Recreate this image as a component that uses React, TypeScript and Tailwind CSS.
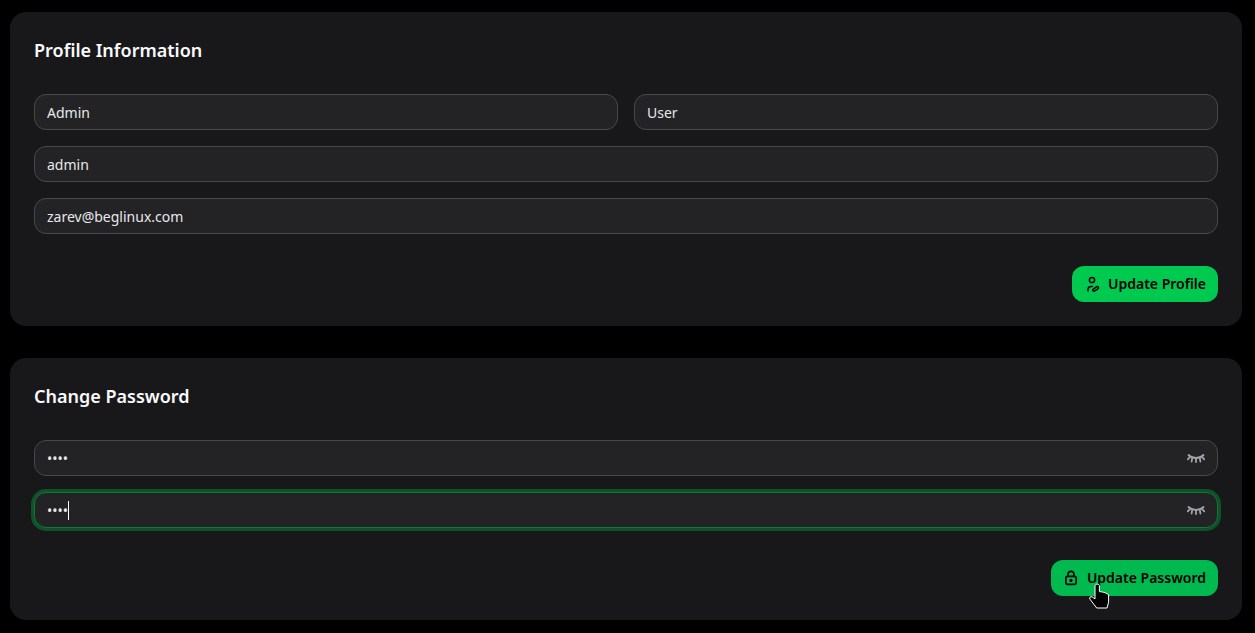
function UserEditIcon() {
  return (
    <svg width="16" height="16" viewBox="0 0 16 16" fill="none" stroke="currentColor" strokeWidth="1.5" strokeLinecap="round" strokeLinejoin="round" className="shrink-0">
      <circle cx="8" cy="4" r="2.6" />
      <path d="M4 15v-1.500c0-2 1.400-3 3.200-3h1.300" />
      <path d="M9 15l-.2-1.400 3.600-2.700c.7-.5 1.500-.4 1.900.1.400.6.200 1.300-.4 1.800l-3.500 2.400z" />
    </svg>
  );
}

function LockIcon() {
  return (
    <svg width="16" height="16" viewBox="0 0 16 16" fill="none" stroke="currentColor" strokeWidth="1.6" strokeLinecap="round" strokeLinejoin="round" className="shrink-0">
      <rect x="2.800" y="6.400" width="10.400" height="8" rx="1.600" />
      <path d="M5 6.400V4.400a3 3 0 0 1 6 0v2" />
      <circle cx="8" cy="10.400" r=".8" fill="currentColor" />
    </svg>
  );
}

function EyeClosedIcon() {
  return (
    <svg width="20" height="20" viewBox="0 0 20 20" fill="none" stroke="currentColor" strokeWidth="1.800" strokeLinecap="round" className="shrink-0 text-[#a1a1aa]">
      <path d="M2.500 7c2 2 4.600 3 7.500 3s5.500-1 7.500-3" />
      <path d="M6.200 10l-.6 3.500M10 10.500v3.500M13.800 10l.6 3.500M4 8.800l-2.200 2.500M16 8.800l2.200 2.500" />
    </svg>
  );
}

function HandCursor() {
  return (
    <svg width="21" height="26" viewBox="0 0 21 26" className="absolute left-[1089px] top-[583px] pointer-events-none">
      <path
        d="M6 2.800c0-2.200 4.400-2.200 4.400 0v5.800l3.200.4 3 .9 3 1.700v7.600l-1.600 5.800H7.700L.9 16.100c-1-1.500.8-3.100 2.200-2.200l2.900 2z"
        fill="#000"
        stroke="#fff"
        strokeWidth="1"
        strokeLinejoin="round"
      />
    </svg>
  );
}

function TextField({ value, type = "text", eye = false, focused = false }: { value: string; type?: string; eye?: boolean; focused?: boolean }) {
  return (
    <div className="relative flex-1">
      <input
        readOnly
        type={type}
        value={value}
        className={
          focused
            ? "h-9 w-full rounded-xl border border-[#0c7a38] bg-[#232325] px-3 text-sm text-[#e8e8ea] outline-none shadow-[0_0_0_3px_#0f5229]"
            : "h-9 w-full rounded-xl border border-[#47474d] bg-[#232325] px-3 text-sm text-[#e8e8ea] outline-none"
        }
      />
      {focused && <span className="absolute left-[34px] top-[9px] h-[19px] w-px bg-white" />}
      {eye && (
        <span className="absolute right-[12px] top-[8px]">
          <EyeClosedIcon />
        </span>
      )}
    </div>
  );
}

export default function App() {
  return (
    <div className="relative h-[633px] overflow-hidden bg-black pl-[10px] pr-[13px] pt-3 font-['Noto_Sans',sans-serif]">
      {/* Profile Information */}
      <section className="rounded-2xl bg-[#18181b] px-6 pb-6 pt-6">
        <h2 className="mb-[30px] text-lg leading-7 font-semibold text-[#fafafa]">Profile Information</h2>
        <div className="flex flex-col gap-4">
          <div className="flex gap-4">
            <TextField value="Admin" />
            <TextField value="User" />
          </div>
          <TextField value="admin" />
          <TextField value="zarev@beglinux.com" />
        </div>
        <div className="mt-8 flex justify-end">
          <button className="flex h-9 items-center gap-2 rounded-xl bg-[#00c950] px-3 text-sm font-semibold text-black">
            <UserEditIcon />
            Update Profile
          </button>
        </div>
      </section>

      {/* Change Password */}
      <section className="mt-8 rounded-2xl bg-[#18181b] px-6 pb-6 pt-6">
        <h2 className="mb-[30px] text-lg leading-7 font-semibold text-[#fafafa]">Change Password</h2>
        <div className="flex flex-col gap-4">
          <TextField value="1234" type="password" eye />
          <TextField value="1234" type="password" eye focused />
        </div>
        <div className="mt-8 flex justify-end">
          <button className="flex h-9 items-center gap-2 rounded-xl bg-[#00b94f] px-3 text-sm font-semibold text-black">
            <LockIcon />
            Update Password
          </button>
        </div>
      </section>

      <HandCursor />
    </div>
  );
}
